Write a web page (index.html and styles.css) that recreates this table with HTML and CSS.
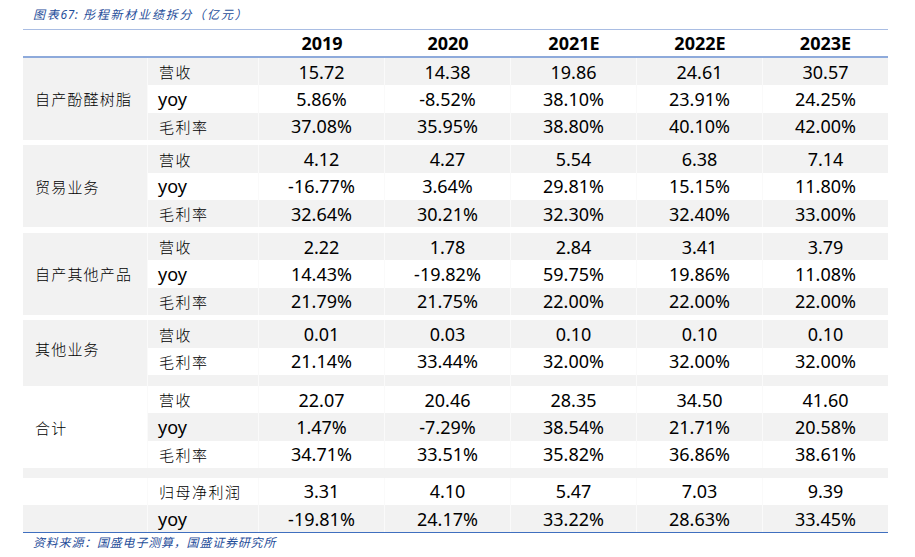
FILE: index.html
```html
<!DOCTYPE html>
<html lang="zh-CN">
<head>
<meta charset="utf-8">
<title>彤程新材业绩拆分</title>
<link rel="stylesheet" href="styles.css">
</head>
<body>
<div class="page">
  <div class="caption">图表<span class="lat">67:</span> 彤程新材业绩拆分（亿元）</div>
  <div class="table">
    <div class="c hd"></div><div class="c hd"></div>
    <div class="c hd num">2019</div><div class="c hd num">2020</div><div class="c hd num">2021E</div><div class="c hd num">2022E</div><div class="c hd num last">2023E</div>

    <div class="c lab g span3">自产酚醛树脂</div>
    <div class="c sub g">营收</div><div class="c num g">15.72</div><div class="c num g">14.38</div><div class="c num g">19.86</div><div class="c num g">24.61</div><div class="c num g last">30.57</div>
    <div class="c sub yoy">yoy</div><div class="c num">5.86%</div><div class="c num">-8.52%</div><div class="c num">38.10%</div><div class="c num">23.91%</div><div class="c num last">24.25%</div>
    <div class="c sub g">毛利率</div><div class="c num g">37.08%</div><div class="c num g">35.95%</div><div class="c num g">38.80%</div><div class="c num g">40.10%</div><div class="c num g last">42.00%</div>
    <div class="gap"></div>

    <div class="c lab g span3">贸易业务</div>
    <div class="c sub g">营收</div><div class="c num g">4.12</div><div class="c num g">4.27</div><div class="c num g">5.54</div><div class="c num g">6.38</div><div class="c num g last">7.14</div>
    <div class="c sub yoy">yoy</div><div class="c num">-16.77%</div><div class="c num">3.64%</div><div class="c num">29.81%</div><div class="c num">15.15%</div><div class="c num last">11.80%</div>
    <div class="c sub g">毛利率</div><div class="c num g">32.64%</div><div class="c num g">30.21%</div><div class="c num g">32.30%</div><div class="c num g">32.40%</div><div class="c num g last">33.00%</div>
    <div class="gap"></div>

    <div class="c lab g span3">自产其他产品</div>
    <div class="c sub g">营收</div><div class="c num g">2.22</div><div class="c num g">1.78</div><div class="c num g">2.84</div><div class="c num g">3.41</div><div class="c num g last">3.79</div>
    <div class="c sub yoy">yoy</div><div class="c num">14.43%</div><div class="c num">-19.82%</div><div class="c num">59.75%</div><div class="c num">19.86%</div><div class="c num last">11.08%</div>
    <div class="c sub g">毛利率</div><div class="c num g">21.79%</div><div class="c num g">21.75%</div><div class="c num g">22.00%</div><div class="c num g">22.00%</div><div class="c num g last">22.00%</div>
    <div class="gap"></div>

    <div class="c lab g span3 raise">其他业务</div>
    <div class="c sub g">营收</div><div class="c num g">0.01</div><div class="c num g">0.03</div><div class="c num g">0.10</div><div class="c num g">0.10</div><div class="c num g last">0.10</div>
    <div class="c sub">毛利率</div><div class="c num">21.14%</div><div class="c num">33.44%</div><div class="c num">32.00%</div><div class="c num">32.00%</div><div class="c num last">32.00%</div>
    <div class="c g"></div><div class="c g"></div><div class="c g"></div><div class="c g"></div><div class="c g"></div><div class="c g last"></div>

    <div class="c lab span3">合计</div>
    <div class="c sub">营收</div><div class="c num">22.07</div><div class="c num">20.46</div><div class="c num">28.35</div><div class="c num">34.50</div><div class="c num last">41.60</div>
    <div class="c sub yoy g">yoy</div><div class="c num g">1.47%</div><div class="c num g">-7.29%</div><div class="c num g">38.54%</div><div class="c num g">21.71%</div><div class="c num g last">20.58%</div>
    <div class="c sub">毛利率</div><div class="c num">34.71%</div><div class="c num">33.51%</div><div class="c num">35.82%</div><div class="c num">36.86%</div><div class="c num last">38.61%</div>
    <div class="gap g"></div>

    <div class="c lab"></div>
    <div class="c sub">归母净利润</div><div class="c num">3.31</div><div class="c num">4.10</div><div class="c num">5.47</div><div class="c num">7.03</div><div class="c num last">9.39</div>
    <div class="c lab g"></div>
    <div class="c sub yoy g">yoy</div><div class="c num g">-19.81%</div><div class="c num g">24.17%</div><div class="c num g">33.22%</div><div class="c num g">28.63%</div><div class="c num g last">33.45%</div>
  </div>
  <div class="source">资料来源：国盛电子测算，国盛证券研究所</div>
</div>
</body>
</html>
```
FILE: styles.css
```css
html, body {
  margin: 0;
  padding: 0;
  background: #ffffff;
}

.page {
  width: 915px;
  height: 557px;
  padding: 6px 0 0 23px;
  box-sizing: border-box;
}

.caption,
.source {
  font-family: "Noto Sans CJK SC", sans-serif;
  font-style: italic;
  font-size: 12px;
  line-height: 16px;
  color: #1f4e9a;
  margin-left: 10px;
}

.caption {
  letter-spacing: 1.8px;
}

.source {
  letter-spacing: 0.8px;
  margin-top: 1px;
}

.caption .lat {
  font-family: "Noto Sans", "Noto Sans CJK SC", sans-serif;
  letter-spacing: 0.5px;
}

.table {
  margin-top: 6px;
  display: grid;
  grid-template-columns: 125px 111px 126px 126px 126px 126px 125px;
  grid-template-rows:
    28px
    27.33px 27.33px 27.33px 5.5px
    27.33px 27.33px 27.33px 5.5px
    27.33px 27.33px 27.33px 5.5px
    27.33px 27.33px 11px
    27.33px 27.33px 27.33px 9.5px
    27.33px 27.33px;
  border-top: 1px solid #a9bde3;
  border-bottom: 1px solid #3f6fbf;
  width: 865px;
}

.c {
  display: flex;
  align-items: center;
  box-sizing: border-box;
  border-right: 1px solid #fafafa;
  color: #000000;
  overflow: hidden;
  white-space: nowrap;
}

.c.last {
  border-right: none;
}

.g {
  background: #f2f2f2;
}

.hd {
  border-bottom: 2px solid #8eaadb;
  border-right: none;
  font-weight: bold;
}

.num {
  justify-content: center;
  font-family: "Noto Sans", sans-serif;
  font-size: 18px;
}

.lab {
  padding-left: 12px;
  font-family: "Noto Sans CJK SC", sans-serif;
  font-weight: 300;
  font-size: 15px;
  letter-spacing: 1.2px;
}

.span3 {
  grid-row: span 3;
}

.raise {
  padding-bottom: 10px;
}

.sub {
  padding-left: 11px;
  font-family: "Noto Sans CJK SC", sans-serif;
  font-weight: 300;
  font-size: 15px;
  letter-spacing: 1.5px;
}

.sub.yoy {
  padding-left: 10px;
  font-family: "Noto Sans", sans-serif;
  font-weight: 400;
  font-size: 18px;
  letter-spacing: 0;
}

.gap {
  grid-column: 1 / -1;
}
```
